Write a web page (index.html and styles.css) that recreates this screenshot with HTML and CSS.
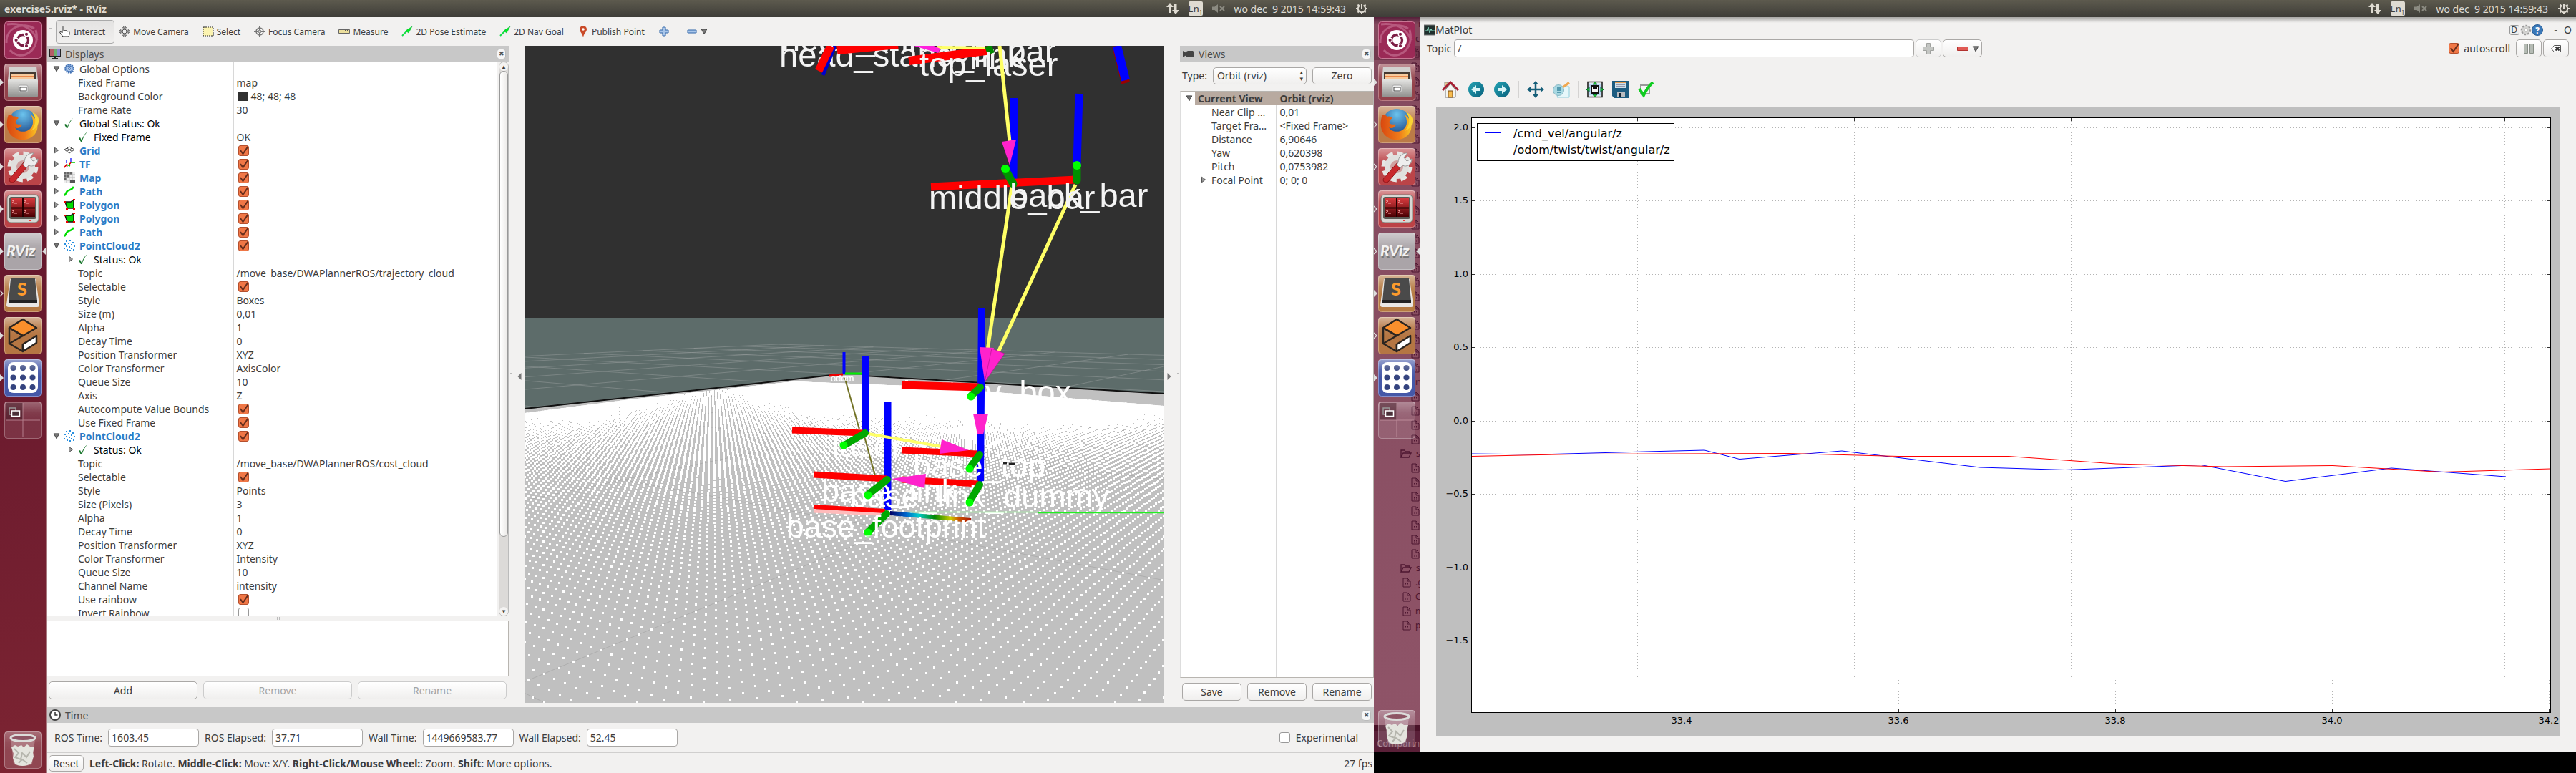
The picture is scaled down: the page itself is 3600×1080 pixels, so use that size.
FILE: index.html
```html
<!DOCTYPE html>
<html lang="en">
<head>
<meta charset="utf-8">
<title>exercise5.rviz* - RViz</title>
<link rel="stylesheet" href="styles.css">
</head>
<body>
<svg class="defs" aria-hidden="true">
  <defs>
    <linearGradient id="gloss" x1="0" y1="0" x2="0" y2="1"><stop offset="0" stop-color="#fff" stop-opacity=".45"/><stop offset=".6" stop-color="#fff" stop-opacity=".08"/><stop offset="1" stop-color="#fff" stop-opacity="0"/></linearGradient>
    <linearGradient id="steel" x1="0" y1="0" x2="0" y2="1"><stop offset="0" stop-color="#e4e4e2"/><stop offset="1" stop-color="#8e8e8c"/></linearGradient>
    <linearGradient id="redscreen" x1="0" y1="0" x2="0" y2="1"><stop offset="0" stop-color="#d83a3e"/><stop offset="1" stop-color="#4a0002"/></linearGradient>
    <radialGradient id="globe" cx=".5" cy=".2" r=".8"><stop offset="0" stop-color="#6cc4ee"/><stop offset="1" stop-color="#12377c"/></radialGradient>
    <linearGradient id="fox" x1="0" y1="0" x2="1" y2="0"><stop offset="0" stop-color="#d9480f"/><stop offset=".6" stop-color="#ef7a1a"/><stop offset="1" stop-color="#f9c623"/></linearGradient>
    <linearGradient id="ball" x1="0" y1="0" x2="1" y2="1"><stop offset="0" stop-color="#25a5b5"/><stop offset="1" stop-color="#08607c"/></linearGradient>
  </defs>
  <symbol id="i-dash" viewBox="0 0 52 52">
    <rect x=".5" y=".5" width="51" height="51" rx="4" fill="#9b2a56" stroke="#c77794"/>
    <path d="M3 30C2 8 26 0 42 10M8 40C24 58 52 40 44 12M4 4C22 2 40 8 46 26" fill="none" stroke="#c9799a" stroke-width="3" opacity=".6"/>
    <circle cx="26" cy="26" r="14" fill="#fff"/><circle cx="26" cy="26" r="7.5" fill="none" stroke="#7c1f45" stroke-width="3.4"/>
    <g fill="#7c1f45" stroke="#fff" stroke-width="1.4"><circle cx="16.6" cy="26" r="2.8"/><circle cx="31" cy="17.8" r="2.8"/><circle cx="31" cy="34.2" r="2.8"/></g>
  </symbol>
  <symbol id="i-files" viewBox="0 0 52 52">
    <rect x=".5" y=".5" width="51" height="51" rx="4" fill="#93424b" stroke="#b97c83"/><rect width="52" height="30" rx="4" fill="url(#gloss)"/>
    <path d="M7 4h38l2 20H5z" fill="#d2d2d0"/><rect x="8" y="12" width="36" height="12" fill="#463a31"/>
    <path d="M10 14h32v10H10z" fill="#e8874a"/><path d="M10 16h32M10 20h32" stroke="#fbe1b8" stroke-width="1.5"/>
    <rect x="5" y="22" width="42" height="25" rx="2" fill="url(#steel)"/><rect x="20" y="30" width="13" height="10" rx="2" fill="#eee" stroke="#aaa"/><rect x="22" y="33" width="9" height="5" fill="#fff" stroke="#444"/>
  </symbol>
  <symbol id="i-firefox" viewBox="0 0 52 52">
    <rect x=".5" y=".5" width="51" height="51" rx="4" fill="#bb7b47" stroke="#cfa078"/><rect width="52" height="30" rx="4" fill="url(#gloss)"/>
    <circle cx="26" cy="24" r="20" fill="url(#globe)"/>
    <path d="M6 12c3 0 5 1 7 3 3-1 5 0 7 2-3 2-5 4-4 7 3 3 6 1 9 2-2 5-7 6-10 4 3 6 13 8 20 3 7-6 6-14 2-21 9 6 13 18 6 27-8 11-27 11-35 0C2 31 3 20 6 12z" fill="url(#fox)"/>
    <path d="M39 9c7 8 5 20-2 26 8-3 12-9 11-17-1-5-5-8-9-9z" fill="#f9d335"/>
  </symbol>
  <symbol id="i-settings" viewBox="0 0 52 52">
    <rect x=".5" y=".5" width="51" height="51" rx="4" fill="#bb4448" stroke="#cf8083"/><rect width="52" height="30" rx="4" fill="url(#gloss)"/>
    <circle cx="26" cy="26" r="17" fill="none" stroke="#e6e6e4" stroke-width="9" stroke-dasharray="8 5.35"/><circle cx="26" cy="26" r="13" fill="#d0a0a0" stroke="#e0e0de" stroke-width="8"/>
    <path d="M8 42 28 19l6 5-20 23c-4 3-9-1-6-5z" fill="#c8282c" stroke="#8e1518"/><path d="M28 20c0-8 6-14 13-13l-5 6 4 5 7-3c0 8-7 12-13 9l-3 4-5-5z" fill="#eee" stroke="#999"/>
  </symbol>
  <symbol id="i-term" viewBox="0 0 52 52">
    <rect x=".5" y=".5" width="51" height="51" rx="4" fill="#bc4246" stroke="#cf8083"/><rect width="52" height="26" rx="4" fill="url(#gloss)"/>
    <rect x="4" y="6" width="44" height="39" rx="5" fill="#d8d8d4" stroke="#77776f"/><rect x="7" y="9" width="38" height="31" rx="3" fill="#5a5a54"/><rect x="9" y="11" width="34" height="26" fill="url(#redscreen)"/>
    <path d="M26 11v26M9 24.500h34" stroke="#200" stroke-width="2"/><path d="M11 14l3 1-3 2m3 1h4M28 14l3 1-3 2m3 1h4M11 28l3 1-3 2m3 1h4M28 28l3 1-3 2m3 1h4" fill="none" stroke="#f4a0a0"/><circle cx="36" cy="42" r="1" fill="#f00"/>
  </symbol>
  <symbol id="i-rviz" viewBox="0 0 52 52">
    <rect x=".5" y=".5" width="51" height="51" rx="4" fill="#aaa4a8" stroke="#c4c0c3"/><rect width="52" height="30" rx="4" fill="url(#gloss)"/>
    <g font-family="Lato,sans-serif" font-weight="900" font-size="21" font-style="italic"><text x="4" y="35" fill="#777">RViz</text><text x="3" y="33" fill="#f2f2f2">RViz</text></g>
  </symbol>
  <symbol id="i-subl" viewBox="0 0 52 52">
    <rect x=".5" y=".5" width="51" height="51" rx="4" fill="#b57a42" stroke="#cda077"/><rect width="52" height="30" rx="4" fill="url(#gloss)"/>
    <path d="M8 6h36l5 36c0 2-1 3-3 3H6c-2 0-3-1-3-3z" fill="#e9e7e4"/><path d="M9 5h34l3 32H6z" fill="#4a4a4a"/><path d="M6 35h40v5H6z" fill="#222"/>
    <text x="18" y="29" font-family="Lato,sans-serif" font-weight="900" font-size="25" fill="#fb9b2d">S</text>
  </symbol>
  <symbol id="i-box" viewBox="0 0 52 52">
    <rect x=".5" y=".5" width="51" height="51" rx="4" fill="#b57643" stroke="#cda077"/><rect width="52" height="26" rx="4" fill="url(#gloss)"/>
    <g stroke="#2a2420" stroke-width="2.500" stroke-linejoin="round" fill="none"><path d="M26 3l19 12-19 11L7 15z" fill="#f98f2c"/><path d="M7 15v22l19 11M7 37l19-11M26 26l-19-11M26 48V37"/><path d="M26 38l19-12v10L26 48z" fill="#fff"/></g>
  </symbol>
  <symbol id="i-grid" viewBox="0 0 52 52">
    <rect x=".5" y=".5" width="51" height="51" rx="4" fill="#4558a8" stroke="#8590cd"/><rect x="5" y="4" width="42" height="43" rx="8" fill="#fff"/>
    <g fill="#34437f"><circle cx="12.500" cy="12" r="4"/><circle cx="26" cy="12" r="4"/><circle cx="39.500" cy="12" r="4"/><circle cx="12.500" cy="25.500" r="4"/><circle cx="26" cy="25.500" r="4"/><circle cx="39.500" cy="25.500" r="4"/><circle cx="12.500" cy="39" r="4"/><circle cx="26" cy="39" r="4"/><circle cx="39.500" cy="39" r="4"/></g><rect width="52" height="26" rx="4" fill="url(#gloss)"/>
  </symbol>
  <symbol id="i-work" viewBox="0 0 52 52">
    <rect x=".5" y=".5" width="51" height="51" rx="4" fill="#fff" fill-opacity=".1" stroke="#fff" stroke-opacity=".3"/><rect width="52" height="26" rx="4" fill="url(#gloss)" opacity=".6"/><rect x="2" y="2" width="24" height="24" fill="#3e1522" opacity=".5"/>
    <path d="M26 2v48M2 26h48" stroke="#cfa0ac" opacity=".7"/><path d="M7 9h9v9H7z" fill="none" stroke="#999" stroke-width="1.500"/><path d="M10.500 13h11v7.500h-11z" fill="#4a3038" stroke="#fff" stroke-width="1.500"/>
  </symbol>
  <symbol id="i-trash" viewBox="0 0 52 52">
    <rect x=".5" y=".5" width="51" height="51" rx="4" fill="#fff" fill-opacity=".16" stroke="#fff" stroke-opacity=".35"/><rect width="52" height="26" rx="4" fill="url(#gloss)" opacity=".5"/>
    <path d="M9 10l4 35c3 4 23 4 26 0l4-35z" fill="#fff" opacity=".25"/><path d="M10 22l5-3 4 2 5-2 3 3 5-4 4 3 6 0-2 8 1 6-3 9c-6 5-18 5-23 1l-3-8 1-6z" fill="#e4e4de"/><path d="M14 24l6 6-5 6 8 3 2-9 6 6 5-8M20 44l5-5 7 5" stroke="#b5b5ad" fill="none" stroke-width="2"/>
    <ellipse cx="26" cy="9" rx="17" ry="4.500" fill="#8e5564" stroke="#dcdcda" stroke-width="3"/>
  </symbol>
  <symbol id="s-net" viewBox="0 0 18 18"><path d="M5 1l5 6H7v8H3.500V7H0zM13 17l-5-6h3V3h3.500v8H18z" fill="#dfdbd2"/></symbol>
  <symbol id="s-mute" viewBox="0 0 18 18"><path d="M0 6.500h3.500L8 3v12l-4.500-4H0z" fill="#8b8a81"/><path d="M11 6l6 6M17 6l-6 6" stroke="#8b8a81" stroke-width="2"/></symbol>
  <symbol id="s-cog" viewBox="0 0 18 18"><path d="M6.500 4.500a5.200 5.200 0 1 0 5 0" fill="none" stroke="#dfdbd2" stroke-width="2"/><path d="M9 2v7M3.500 3.500L5 5M14.500 3.500L13 5M1 9h2M15 9h2M3.500 14.500L5 13M14.500 14.500L13 13M9 15v2" stroke="#dfdbd2" stroke-width="2"/></symbol>
  <symbol id="t-ok" viewBox="0 0 16 16"><path d="M1 10l2-1 2 4C7 8 9 4 13 1 9 6 7 10 5.500 15H4z" fill="#17752a"/></symbol>
  <symbol id="t-gear" viewBox="0 0 16 16"><circle cx="8" cy="8" r="5.800" fill="#9cbbe6" stroke="#4574b5" stroke-width="2" stroke-dasharray="2 1"/><circle cx="8" cy="8" r="4" fill="#a8c4ea" stroke="#4574b5"/><circle cx="8" cy="8" r="1.500" fill="#fff" stroke="#4574b5"/></symbol>
  <symbol id="t-grid" viewBox="0 0 16 16"><path d="M1 7l7-4 7 4-7 5zM4.500 5l7 4.500M11.500 5l-7 4.500" fill="none" stroke="#444"/></symbol>
  <symbol id="t-tf" viewBox="0 0 16 16"><path d="M4 7V3M10 5V0" stroke="#33f" stroke-width="1.500"/><path d="M4 9l5 2M10 6l6 0" stroke="#0c0" stroke-width="1.500"/><path d="M0 14l4-5 1 4M7 10l3-4" stroke="#d00" stroke-width="1.500" fill="none"/></symbol>
  <symbol id="t-map" viewBox="0 0 16 16"><path d="M0 0h11v4H7v5H4v3H0z" fill="#666"/><path d="M11 0h5v16H0v-3h4V9h3V4h4z" fill="#eee"/><path d="M0 4h16M0 8h16M0 12h16M4 0v16M8 0v16M12 0v16" stroke="#bbb"/><path d="M9 12h7v4H9z" fill="#555"/></symbol>
  <symbol id="t-path" viewBox="0 0 16 16"><path d="M1 14c2-1 2-4 4-6s6-1 9-6" fill="none" stroke="#0d0" stroke-width="2.500"/></symbol>
  <symbol id="t-poly" viewBox="0 0 16 16"><path d="M2 4l8 0 4-3 0 12-9 0z" fill="#0d0" stroke="#111" stroke-width="1.500"/><path d="M0 3h3v2H0zM13 0h3v2h-3zM3 12h3v3H3zM13 12h3v3h-3z" fill="#e00"/></symbol>
  <symbol id="t-cloud" viewBox="0 0 16 16"><path d="M3 1h2v2H3zM8 0h2v2H8zM12 3h2v2h-2zM1 5h2v2H1zM6 4h2v2H6zM10 6h2v2h-2zM14 8h2v2h-2zM3 8h2v2H3zM7 9h2v2H7zM0 11h2v2H0zM4 13h2v2H4zM10 11h2v2h-2zM8 14h2v2H8zM13 13h2v2h-2z" fill="#2a90e0"/></symbol>
  <symbol id="b-arrow" viewBox="0 0 16 16"><path d="M1 14L10 5" stroke="#1d4" stroke-width="2"/><path d="M15 1L6 7l4 3z" fill="#0e2" stroke="#0a3" stroke-width=".5"/></symbol>
  <symbol id="a-down" viewBox="0 0 8 8"><path d="M1 1.500h6L4 7z" fill="#777" stroke="#444" stroke-width=".8"/></symbol>
  <symbol id="a-right" viewBox="0 0 8 8"><path d="M2 1v6l4-3z" fill="#999" stroke="#555" stroke-width=".8"/></symbol>
  <symbol id="m-on" viewBox="0 0 6 10"><path d="M0 0l5 5-5 5z" fill="#ddd"/></symbol>
  <symbol id="m-off" viewBox="0 0 6 10"><path d="M0 1l4 4-4 4" fill="none" stroke="#ddd" stroke-width="1.300"/></symbol>
  <symbol id="d-file" viewBox="0 0 12 14"><path d="M1 1h6l4 4v8H1zM7 1v4h4M4 9l1-1M8 9L7 8M4 10h1M7 10h1" fill="none" stroke="#4d1630"/></symbol>
  <symbol id="d-dir" viewBox="0 0 16 14"><path d="M1 12V2h5l1 2h6v2M1 12l3-6h11l-3 6z" fill="none" stroke="#4d1630" stroke-width="1.300"/></symbol>
</svg>

<main class="desktop">
<section class="screen left">
  <header class="panel">
    <span class="panel-title">exercise5.rviz* - RViz</span>
    <span class="status"><svg class="s18"><use href="#s-net"/></svg><span class="lang">En<sub>1</sub></span><svg class="s18"><use href="#s-mute"/></svg><time>wo dec&nbsp; 9 2015 14:59:43</time><svg class="s18"><use href="#s-cog"/></svg></span>
  </header>
  <div class="screen-body">
    <nav class="launcher">
      <a href="#" aria-label="Dash"><svg class="app"><use href="#i-dash"/></svg></a>
      <a href="#" aria-label="Files"><svg class="mark"><use href="#m-on"/></svg><svg class="app"><use href="#i-files"/></svg></a>
      <a href="#" aria-label="Firefox"><svg class="mark"><use href="#m-on"/></svg><svg class="app"><use href="#i-firefox"/></svg></a>
      <a href="#" aria-label="Settings"><svg class="mark"><use href="#m-on"/></svg><svg class="app"><use href="#i-settings"/></svg></a>
      <a href="#" aria-label="Terminator"><svg class="mark"><use href="#m-on"/></svg><svg class="app"><use href="#i-term"/></svg></a>
      <a href="#" aria-label="RViz"><svg class="mark"><use href="#m-on"/></svg><svg class="app"><use href="#i-rviz"/></svg><svg class="mark focus"><use href="#m-on"/></svg></a>
      <a href="#" aria-label="Sublime Text"><svg class="mark"><use href="#m-off"/></svg><svg class="app"><use href="#i-subl"/></svg></a>
      <a href="#" aria-label="Gazebo"><svg class="mark"><use href="#m-on"/></svg><svg class="app"><use href="#i-box"/></svg></a>
      <a href="#" aria-label="rqt"><svg class="mark"><use href="#m-on"/></svg><svg class="app"><use href="#i-grid"/></svg></a>
      <a href="#" aria-label="Workspaces"><svg class="app"><use href="#i-work"/></svg></a>
      <a href="#" aria-label="Trash" class="trash"><svg class="app"><use href="#i-trash"/></svg></a>
    </nav>
    <div class="window">
      <div class="toolbar">
        <span class="grip-v"></span>
        <button class="tool active"><svg class="i16" viewBox="0 0 16 16"><path d="M5 15l-4-5c-1-2 1-2 3 0V1.500c0-1.500 2-1.500 2 0V7c2-1 2 0 2 0 2-1 2 0 2.500 1C13 7 14 8 14 9v3l-1 3z" fill="#fff" stroke="#222"/></svg>Interact</button>
        <button class="tool"><svg class="i16" viewBox="0 0 16 16"><path d="M8 0l2.500 3h-5zM8 16l2.500-3h-5zM0 8l3-2.500v5zM16 8l-3-2.500v5zM8 3v10M3 8h10" stroke="#555" fill="#ddd"/><circle cx="8" cy="8" r="3" fill="#eee" stroke="#555"/></svg>Move Camera</button>
        <button class="tool"><svg class="i16" viewBox="0 0 16 16"><path d="M1 2h14v12H1z" fill="#fbf3b0" stroke="#222" stroke-dasharray="2 1"/></svg>Select</button>
        <button class="tool"><svg class="i16" viewBox="0 0 16 16"><circle cx="8" cy="8" r="5" fill="none" stroke="#777" stroke-width="1.500"/><path d="M8 0v16M0 8h16" stroke="#777" stroke-width="2"/><circle cx="8" cy="8" r="2" fill="#ddd" stroke="#777"/></svg>Focus Camera</button>
        <button class="tool"><svg class="i16" viewBox="0 0 16 16"><path d="M.5 5.500h15v5H.5z" fill="#ecdf9c" stroke="#666"/><path d="M3.500 6v2M6.500 6v2M9.500 6v2M12.500 6v2" stroke="#555"/></svg>Measure</button>
        <button class="tool"><svg class="i16"><use href="#b-arrow"/></svg>2D Pose Estimate</button>
        <button class="tool"><svg class="i16"><use href="#b-arrow"/></svg>2D Nav Goal</button>
        <button class="tool"><svg class="i16" viewBox="0 0 16 16"><path d="M8 16C7 11 3 8 3 5a5 5 0 0 1 10 0c0 3-4 6-5 11z" fill="#c94a28"/><circle cx="8" cy="5" r="1.800" fill="#fff"/></svg>Publish Point</button>
        <button class="tool" aria-label="Add tool"><svg class="i16" viewBox="0 0 16 16"><path d="M6 2h4v4h4v4h-4v4H6v-4H2V6h4z" fill="#a9c6ea" stroke="#2f65a8"/></svg></button>
        <button class="tool last" aria-label="Remove tool"><svg class="i16" viewBox="0 0 16 16"><path d="M2 6h12v4H2z" fill="#a9c6ea" stroke="#2f65a8"/></svg><svg class="i8"><use href="#a-down"/></svg></button>
      </div>
      <div class="workspace">
        <section class="displays">
          <h2 class="dock-title"><svg class="i16" viewBox="0 0 16 16"><path d="M0 1h16v11H0z" fill="#222"/><path d="M1 2h5v9H1z" fill="#b65c66"/><path d="M6 2h4v9H6z" fill="#6cb070"/><path d="M10 2h5v9h-5z" fill="#8b8bd0"/><path d="M7 12h2v2h3v2H4v-2h3z" fill="#222"/></svg>Displays<button class="close" aria-label="Close">✖</button></h2>
          <div class="tree-wrap">
            <div class="tree">
              <table>
                <tr><th class="l0"><svg class="i8"><use href="#a-down"/></svg><svg class="i16"><use href="#t-gear"/></svg>Global Options</th><td></td></tr>
                <tr><th>Fixed Frame</th><td>map</td></tr>
                <tr><th>Background Color</th><td><i class="swatch"></i>48; 48; 48</td></tr>
                <tr><th>Frame Rate</th><td>30</td></tr>
                <tr><th class="l0 ok"><svg class="i8"><use href="#a-down"/></svg><svg class="i16"><use href="#t-ok"/></svg>Global Status: Ok</th><td></td></tr>
                <tr><th class="l1 ok"><i class="i8"></i><svg class="i16"><use href="#t-ok"/></svg>Fixed Frame</th><td>OK</td></tr>
                <tr><th class="l0 name"><svg class="i8"><use href="#a-right"/></svg><svg class="i16"><use href="#t-grid"/></svg>Grid</th><td><input type="checkbox" aria-label="Grid" checked></td></tr>
                <tr><th class="l0 name"><svg class="i8"><use href="#a-right"/></svg><svg class="i16"><use href="#t-tf"/></svg>TF</th><td><input type="checkbox" aria-label="TF" checked></td></tr>
                <tr><th class="l0 name"><svg class="i8"><use href="#a-right"/></svg><svg class="i16"><use href="#t-map"/></svg>Map</th><td><input type="checkbox" aria-label="Map" checked></td></tr>
                <tr><th class="l0 name"><svg class="i8"><use href="#a-right"/></svg><svg class="i16"><use href="#t-path"/></svg>Path</th><td><input type="checkbox" aria-label="Path" checked></td></tr>
                <tr><th class="l0 name"><svg class="i8"><use href="#a-right"/></svg><svg class="i16"><use href="#t-poly"/></svg>Polygon</th><td><input type="checkbox" aria-label="Polygon" checked></td></tr>
                <tr><th class="l0 name"><svg class="i8"><use href="#a-right"/></svg><svg class="i16"><use href="#t-poly"/></svg>Polygon</th><td><input type="checkbox" aria-label="Polygon" checked></td></tr>
                <tr><th class="l0 name"><svg class="i8"><use href="#a-right"/></svg><svg class="i16"><use href="#t-path"/></svg>Path</th><td><input type="checkbox" aria-label="Path" checked></td></tr>
                <tr><th class="l0 name"><svg class="i8"><use href="#a-down"/></svg><svg class="i16"><use href="#t-cloud"/></svg>PointCloud2</th><td><input type="checkbox" aria-label="PointCloud2" checked></td></tr>
                <tr><th class="l1 ok"><svg class="i8"><use href="#a-right"/></svg><svg class="i16"><use href="#t-ok"/></svg>Status: Ok</th><td></td></tr>
                <tr><th>Topic</th><td>/move_base/DWAPlannerROS/trajectory_cloud</td></tr>
                <tr><th>Selectable</th><td><input type="checkbox" aria-label="Selectable" checked></td></tr>
                <tr><th>Style</th><td>Boxes</td></tr>
                <tr><th>Size (m)</th><td>0,01</td></tr>
                <tr><th>Alpha</th><td>1</td></tr>
                <tr><th>Decay Time</th><td>0</td></tr>
                <tr><th>Position Transformer</th><td>XYZ</td></tr>
                <tr><th>Color Transformer</th><td>AxisColor</td></tr>
                <tr><th>Queue Size</th><td>10</td></tr>
                <tr><th>Axis</th><td>Z</td></tr>
                <tr><th>Autocompute Value Bounds</th><td><input type="checkbox" aria-label="Autocompute Value Bounds" checked></td></tr>
                <tr><th>Use Fixed Frame</th><td><input type="checkbox" aria-label="Use Fixed Frame" checked></td></tr>
                <tr><th class="l0 name"><svg class="i8"><use href="#a-down"/></svg><svg class="i16"><use href="#t-cloud"/></svg>PointCloud2</th><td><input type="checkbox" aria-label="PointCloud2" checked></td></tr>
                <tr><th class="l1 ok"><svg class="i8"><use href="#a-right"/></svg><svg class="i16"><use href="#t-ok"/></svg>Status: Ok</th><td></td></tr>
                <tr><th>Topic</th><td>/move_base/DWAPlannerROS/cost_cloud</td></tr>
                <tr><th>Selectable</th><td><input type="checkbox" aria-label="Selectable" checked></td></tr>
                <tr><th>Style</th><td>Points</td></tr>
                <tr><th>Size (Pixels)</th><td>3</td></tr>
                <tr><th>Alpha</th><td>1</td></tr>
                <tr><th>Decay Time</th><td>0</td></tr>
                <tr><th>Position Transformer</th><td>XYZ</td></tr>
                <tr><th>Color Transformer</th><td>Intensity</td></tr>
                <tr><th>Queue Size</th><td>10</td></tr>
                <tr><th>Channel Name</th><td>intensity</td></tr>
                <tr><th>Use rainbow</th><td><input type="checkbox" aria-label="Use rainbow" checked></td></tr>
                <tr><th>Invert Rainbow</th><td><input type="checkbox" aria-label="Invert Rainbow"></td></tr>
              </table>
            </div>
            <div class="scrollbar"><i class="sb-btn">▴</i><i class="sb-thumb"></i><i class="sb-rest"></i><i class="sb-btn">▾</i></div>
          </div>
          <div class="split-h"><span class="grip-h"></span></div>
          <div class="description"></div>
          <div class="buttons wide"><button>Add</button><button disabled>Remove</button><button disabled>Rename</button></div>
        </section>
        <div class="handle"><span class="grip-v"></span><svg class="i10" viewBox="0 0 8 8"><path d="M6 0v8L2 4z" fill="#777"/></svg></div>
        <div class="scene">
          <canvas id="ground" width="894" height="918"></canvas>
          <svg class="frames" viewBox="733 64 894 918" preserveAspectRatio="none">
            <defs><linearGradient id="traj"><stop offset="0" stop-color="#006"/><stop offset=".2" stop-color="#06c"/><stop offset=".35" stop-color="#0cc"/><stop offset=".55" stop-color="#080"/><stop offset=".75" stop-color="#cc0"/><stop offset=".85" stop-color="#c50"/><stop offset="1" stop-color="#a10"/></linearGradient></defs>
            <g class="lbl">
              <text x="1092" y="71">head_link</text><text x="1089" y="93">head_stand_link</text><text x="1316" y="87">top_bar</text>
            </g>
            <g fill="none">
              <path d="M1167 64L1150 105M1560 64L1572 112" stroke="#00c" stroke-width="5"/>
              <path d="M1161 64L1144 99" stroke="#f00" stroke-width="11"/>
              <path d="M1170 70L1255 62M1270 85L1385 70" stroke="#f00" stroke-width="12"/>
              <path d="M1560 64L1573 116" stroke="#900" stroke-width="12"/><path d="M1561 64L1573 112" stroke="#00f" stroke-width="12"/>
              <path d="M1310 66L1378 67" stroke="#ffff66" stroke-width="4"/>
              <path d="M1381 64L1385 75" stroke="#080" stroke-width="10"/>
            </g>
            <path d="M1277 64h28l9 4-3 6z" fill="#f2d"/>
            <g class="lbl"><text x="1285" y="106">top_laser</text></g>
            <g fill="none">
              <path d="M1417 137L1416 252M1508 131L1505 230" stroke="#00f" stroke-width="11"/>
              <path d="M1397 64L1411 198M1414 260L1380 490M1503 258L1395 492" stroke="#ffff66" stroke-width="5"/>
              <path d="M1301 261L1502 251" stroke="#f00" stroke-width="11"/>
              <path d="M1405 237L1416 257M1505 232V252" stroke="#009000" stroke-width="11" stroke-linecap="round"/>
            </g>
            <path d="M1400 198l20-3-9 36z" fill="#f2c"/>
            <ellipse cx="1405" cy="236" rx="6" ry="6" fill="#0f0"/><ellipse cx="1505" cy="231" rx="6" ry="6" fill="#0f0"/>
            <g class="lbl"><text x="1298" y="292">middle_bar</text><text x="1411" y="289">back_bar</text></g>
            <g class="lbl lower"><text x="1262" y="563">battery_box</text><text x="1163" y="638">laser</text></g>
            <g fill="none">
              <path d="M1180 526L1201 600M1208 610L1224 668" stroke="#6f6f20" stroke-width="2"/>
              <path d="M1179.500 492V523" stroke="#00f" stroke-width="4"/><path d="M1159 525L1178 523" stroke="#e00" stroke-width="3"/><path d="M1181 522H1204" stroke="#0e0" stroke-width="3"/>
              <path d="M1372 430L1370 674M1209 498V606M1240.500 562V713" stroke="#00f" stroke-width="10"/>
              <path d="M1260 538L1368 541" stroke="#f00" stroke-width="11"/>
              <path d="M1107 601L1206 605M1260 629L1366 634M1137 663L1239 669M1260 670L1367 676" stroke="#f00" stroke-width="9"/>
              <path d="M1137 714L1230 718" stroke="#fbb" stroke-width="5"/><path d="M1137 708L1237 714" stroke="#f00" stroke-width="6"/>
              <path d="M1213 606L1316 624" stroke="#ffff66" stroke-width="4"/>
            </g>
            <g class="lbl tiny"><text x="1161" y="533">odom</text><text x="1167" y="533">map</text></g>
            <g class="lbl lower"><text x="1276" y="666">base_top</text><text x="1148" y="701">base_link</text><text x="1187" y="709">base_link_dummy</text></g>
            <g fill="#f2c"><path d="M1369 485l20 1-13 46z"/><path d="M1386 487l18 7-28 40z" stroke="#a18" stroke-width=".6"/><path d="M1360 578h21l-7 29h-8z"/><path d="M1316 614l38 15-41 5z"/><path d="M1246 669l48-7-2 20z"/></g>
            <g stroke="#00a800" stroke-width="10" stroke-linecap="round"><path d="M1357 553L1370 541M1180 622L1209 605M1355 654L1369 635M1213 691L1240 670M1355 701L1369 677M1213 743L1239 718"/></g>
            <g fill="#0f0"><circle cx="1357" cy="554" r="5.500"/><circle cx="1179" cy="622" r="5.500"/><circle cx="1355" cy="655" r="5.500"/><circle cx="1213" cy="692" r="5.500"/><circle cx="1355" cy="702" r="5.500"/><circle cx="1213" cy="744" r="5.500"/></g>
            <path d="M1208 747h11l-6 4z" fill="#afa"/>
            <path d="M1270 715.500H1450" stroke="#9f9" stroke-width="1.500"/><path d="M1450 716.500H1627" stroke="#2e2" stroke-width="1.500"/>
            <path d="M1244 714L1357 724v6L1244 720z" fill="url(#traj)"/>
            <path d="M1402 647h5M1410 648h9" stroke="#222" stroke-width="3"/>
            <g class="lbl foot"><text x="1099" y="751">base_footprint</text></g>
          </svg>
        </div>
        <div class="handle right"><svg class="i10" viewBox="0 0 8 8"><path d="M2 0v8l4-4z" fill="#777"/></svg><span class="grip-v"></span></div>
        <section class="views">
          <h2 class="dock-title"><svg class="i16" viewBox="0 0 16 16"><path d="M0 4l5 3V5l2-1h7l2 2v5l-2 2H7l-2-1v-2l-5 3z" fill="#444"/></svg>Views<button class="close" aria-label="Close">✖</button></h2>
          <div class="view-type"><label for="vtype">Type:</label><span class="select"><select id="vtype"><option>Orbit (rviz)</option></select><i>▴<br>▾</i></span><button>Zero</button></div>
          <div class="tree view-tree">
            <table>
              <tr class="current"><th><svg class="i8"><use href="#a-down"/></svg><span>Current View</span></th><td>Orbit (rviz)</td></tr>
              <tr><th>Near Clip …</th><td>0,01</td></tr>
              <tr><th>Target Fra…</th><td>&lt;Fixed Frame&gt;</td></tr>
              <tr><th>Distance</th><td>6,90646</td></tr>
              <tr><th>Yaw</th><td>0,620398</td></tr>
              <tr><th>Pitch</th><td>0,0753982</td></tr>
              <tr><th class="sub"><svg class="i8"><use href="#a-right"/></svg>Focal Point</th><td>0; 0; 0</td></tr>
            </table>
          </div>
          <div class="buttons"><button>Save</button><button>Remove</button><button>Rename</button></div>
        </section>
      </div>
      <section class="time-panel">
        <h2 class="dock-title"><svg class="i16" viewBox="0 0 16 16"><circle cx="8" cy="8" r="7" fill="#fff" stroke="#444" stroke-width="2"/><path d="M8 4v4h3.500" fill="none" stroke="#333" stroke-width="1.500"/></svg>Time<button class="close" aria-label="Close">✖</button></h2>
        <div class="times">
          <label>ROS Time:<input type="text" value="1603.45"></label>
          <label>ROS Elapsed:<input type="text" value="37.71"></label>
          <label>Wall Time:<input type="text" value="1449669583.77"></label>
          <label>Wall Elapsed:<input type="text" value="52.45"></label>
          <label class="exp"><input type="checkbox">Experimental</label>
        </div>
      </section>
      <footer class="statusbar"><button>Reset</button><p><b>Left-Click:</b> Rotate. <b>Middle-Click:</b> Move X/Y. <b>Right-Click/Mouse Wheel:</b>: Zoom. <b>Shift</b>: More options.</p><span>27 fps</span></footer>
    </div>
  </div>
</section>

<section class="screen second">
  <header class="panel">
    <span class="status"><svg class="s18"><use href="#s-net"/></svg><span class="lang">En<sub>1</sub></span><svg class="s18"><use href="#s-mute"/></svg><time>wo dec&nbsp; 9 2015 14:59:43</time><svg class="s18"><use href="#s-cog"/></svg></span>
  </header>
  <div class="screen-body">
    <nav class="launcher glass">
      <div class="behind" id="behind" aria-hidden="true"></div>
      <a href="#" aria-label="Dash"><svg class="app"><use href="#i-dash"/></svg></a>
      <a href="#" aria-label="Files"><svg class="mark"><use href="#m-on"/></svg><svg class="app"><use href="#i-files"/></svg></a>
      <a href="#" aria-label="Firefox"><svg class="mark"><use href="#m-off"/></svg><svg class="app"><use href="#i-firefox"/></svg></a>
      <a href="#" aria-label="Settings"><svg class="mark"><use href="#m-off"/></svg><svg class="app"><use href="#i-settings"/></svg></a>
      <a href="#" aria-label="Terminator"><svg class="mark"><use href="#m-off"/></svg><svg class="app"><use href="#i-term"/></svg></a>
      <a href="#" aria-label="RViz"><svg class="mark"><use href="#m-off"/></svg><svg class="app"><use href="#i-rviz"/></svg><svg class="mark focus"><use href="#m-on"/></svg></a>
      <a href="#" aria-label="Sublime Text"><svg class="mark"><use href="#m-on"/></svg><svg class="app"><use href="#i-subl"/></svg></a>
      <a href="#" aria-label="Gazebo"><svg class="mark"><use href="#m-off"/></svg><svg class="app"><use href="#i-box"/></svg></a>
      <a href="#" aria-label="rqt"><svg class="mark"><use href="#m-on"/></svg><svg class="app"><use href="#i-grid"/></svg></a>
      <a href="#" aria-label="Workspaces"><svg class="app"><use href="#i-work"/></svg></a>
      <a href="#" aria-label="Trash" class="trash"><svg class="app"><use href="#i-trash"/></svg></a>
    </nav>
    <div class="matplot">
      <div class="mp-title"><svg class="i16" viewBox="0 0 16 16"><path d="M0 1h16v14H0z" fill="#20302e" stroke="#777"/><path d="M1 9h3l2-5 2 8 2-6 1 3h4" fill="none" stroke="#7fd0b8"/></svg><h2>MatPlot</h2>
        <span class="mp-ctl"><button class="dbtn">D</button><svg class="i16" viewBox="0 0 16 16"><circle cx="8" cy="8" r="6" fill="#ccc" stroke="#999" stroke-width="2.500" stroke-dasharray="2.500 2"/><circle cx="8" cy="8" r="5" fill="#d4d4d2"/><circle cx="8" cy="8" r="2" fill="#fff" stroke="#aaa"/></svg><svg class="i16" viewBox="0 0 16 16"><circle cx="8" cy="8" r="7.500" fill="#3a78b8" stroke="#285d96"/><text x="8" y="12.500" text-anchor="middle" font-family="Noto Sans,sans-serif" font-size="12" font-weight="bold" fill="#fff">?</text></svg><span class="minmax"><b>-</b><span>O</span></span></span>
      </div>
      <div class="mp-topic">
        <label for="topic">Topic</label><input id="topic" type="text" value="/">
        <button class="w36" disabled aria-label="Add"><svg class="i16" viewBox="0 0 16 16"><path d="M5.500.5h5v5h5v5h-5v5h-5v-5h-5v-5h5z" fill="#c4c6c3" stroke="#a0a29f"/></svg></button>
        <button class="w55" aria-label="Remove"><svg class="i16" viewBox="0 0 16 16"><path d="M.5 5.500h15v5H.5z" fill="#e05a55" stroke="#b2322f"/></svg><svg class="i8"><use href="#a-down"/></svg></button>
        <label class="auto"><input type="checkbox" checked>autoscroll</label>
        <button class="w36" aria-label="Pause"><svg class="i16" viewBox="0 0 16 16"><path d="M1.500 1.500h5v13h-5zM9.500 1.500h5v13h-5z" fill="#b5bbb4" stroke="#888f87"/></svg></button>
        <button class="w36" aria-label="Clear"><svg class="i16" viewBox="0 0 16 16"><path d="M1.500 8l4-4.500h9v9h-9z" fill="#fff" stroke="#555"/><path d="M7.500 5.500l5 5M12.500 5.500l-5 5" stroke="#333" stroke-width="2"/></svg></button>
      </div>
      <div class="mp-tools">
        <button aria-label="Home"><svg viewBox="0 0 24 24"><path d="M4 2h4v8H4z" fill="#e8c890" stroke="#888"/><path d="M5 12l7-8 7 8v11H5z" fill="#f4f4f0" stroke="#777"/><path d="M9 23v-9h6v9z" fill="#f6bb50" stroke="#7a4a10"/><path d="M1 13L12 2l11 11" fill="none" stroke="#a61c30" stroke-width="3"/></svg></button>
        <button aria-label="Back"><svg viewBox="0 0 24 24"><circle cx="12" cy="12" r="11" fill="url(#ball)"/><path d="M5 12l7-6v4h6v4h-6v4z" fill="#d8f4f6"/></svg></button>
        <button aria-label="Forward"><svg viewBox="0 0 24 24"><circle cx="12" cy="12" r="11" fill="url(#ball)"/><path d="M19 12l-7-6v4H6v4h6v4z" fill="#d8f4f6"/></svg></button>
        <i class="sep"></i>
        <button aria-label="Pan"><svg viewBox="0 0 24 24"><path d="M12 3v18M3 12h18" stroke="#155e78" stroke-width="2.500"/><path d="M12 0l4 5H8zM12 24l4-5H8zM0 12l5-4v8zM24 12l-5-4v8z" fill="#155e78"/></svg></button>
        <button aria-label="Zoom"><svg viewBox="0 0 24 24"><path d="M9 8h14v15H6z" fill="#e6f7fa" stroke="#8ecfdd"/><circle cx="8" cy="13" r="7.500" fill="#a8d8e2" stroke="#8bb8c4"/><path d="M6 10h6M6 13h6M6 16h5" stroke="#3a87a0" stroke-width="1.500"/><path d="M13 8L22 1l2 3-9 6z" fill="#f0a850"/></svg></button>
        <i class="sep"></i>
        <button aria-label="Subplots"><svg viewBox="0 0 24 24"><path d="M2 1.500h20v21H2z" fill="#fff" stroke="#111" stroke-width="1.500"/><path d="M4 3.500h16v17H4z" fill="#b9d6f2"/><path d="M7 7h10v10H7z" fill="#f4f4f4" stroke="#111" stroke-width="2"/><path d="M12 1l3 4H9zM12 23l3-4H9zM0 12l4-3v6zM24 12l-4-3v6z" fill="#1fbf2a" stroke="#063"/><path d="M9 10h6" stroke="#111" stroke-width="2"/></svg></button>
        <button aria-label="Save"><svg viewBox="0 0 24 24"><path d="M0 0h24v24H3l-3-3z" fill="#1d5c80"/><path d="M4 1h16v9H4z" fill="#cfe0ea"/><path d="M4 1h16v2H4z" fill="#e59a4c"/><path d="M6 5h12M6 8h12" stroke="#557"/><path d="M7 15h11v8H7z" fill="#b8bcc0"/><path d="M9 17h3v5H9z" fill="#123"/></svg></button>
        <button aria-label="Edit"><svg viewBox="0 0 24 24"><path d="M4 6h12v12H4z" fill="#f6f6f6" stroke="#999" stroke-width="2"/><path d="M2 11l6 9C12 12 16 6 21 2" fill="none" stroke="#10cc20" stroke-width="4"/></svg></button>
      </div>
      <div class="figure">
        <svg viewBox="2007 150 1571 878" id="plot">
          <rect x="2007" y="150" width="1571" height="878" fill="#bfbfbf"/>
          <rect x="2056.500" y="164.500" width="1508" height="831" fill="#fff"/>
          <g stroke="#b4b4b4" stroke-dasharray="1 3"><path d="M2057 178.500H3564M2057 280.500H3564M2057 383.500H3564M2057 485.500H3564M2057 588.500H3564M2057 690.500H3564M2057 793.500H3564M2057 895.500H3564"/><path d="M2288.500 165V947M2591.500 165V947M2894.500 165V947M3197.500 165V947M3500.500 165V947M2350.500 950V995M2653.500 950V995M2956.500 950V995M3259.500 950V995M3562.500 950V995"/></g>
          <path d="M2057 178.500h5M2057 280.500h5M2057 383.500h5M2057 485.500h5M2057 588.500h5M2057 690.500h5M2057 793.500h5M2057 895.500h5M3564 178.500h-4M3564 280.500h-4M3564 383.500h-4M3564 485.500h-4M3564 588.500h-4M3564 690.500h-4M3564 793.500h-4M3564 895.500h-4M2288.500 165v4M2591.500 165v4M2894.500 165v4M3197.500 165v4M3500.500 165v4M2350.500 995v-4M2653.500 995v-4M2956.500 995v-4M3259.500 995v-4M3562.500 995v-4" stroke="#333"/>
          <path d="M2057 634L2150 635 2300 631 2382 629 2431 641.500 2574 630 2767 653 2886 656.500 3076 649.500 3194 672.500 3342 654 3502 666" fill="none" stroke="#00f"/>
          <path d="M2057 637.500L2200 634.500 2500 633.500 2653 637.500H2807L2957 648 3107 652 3260 650.500 3412 659.500 3564 655" fill="none" stroke="#f00"/>
          <rect x="2056.500" y="164.500" width="1508" height="831" fill="none" stroke="#000"/>
          <rect x="2064.500" y="172.500" width="275" height="52" fill="#fff" stroke="#000"/>
          <path d="M2075 185.500h23" stroke="#00f"/><path d="M2075 209.500h23" stroke="#f00"/>
          <g class="legend"><text x="2115" y="192">/cmd_vel/angular/z</text><text x="2115" y="215">/odom/twist/twist/angular/z</text></g>
          <g class="tick" text-anchor="end"><text x="2052" y="182">2.0</text><text x="2052" y="284">1.5</text><text x="2052" y="387">1.0</text><text x="2052" y="489">0.5</text><text x="2052" y="592">0.0</text><text x="2052" y="694">−0.5</text><text x="2052" y="797">−1.0</text><text x="2052" y="899">−1.5</text></g>
          <g class="tick" text-anchor="middle"><text x="2350" y="1011">33.4</text><text x="2653" y="1011">33.6</text><text x="2956" y="1011">33.8</text><text x="3259" y="1011">34.0</text><text x="3562" y="1011">34.2</text></g>
        </svg>
      </div>
    </div>
  </div>
</section>
</main>
<script src="scene.js"></script>
</body>
</html>
```
FILE: styles.css
```css
* { box-sizing: border-box; }
body { margin: 0; background: #000; color: #3c3c3c; font: 14px/19px "Noto Sans", "Open Sans", sans-serif; }
h2, p { margin: 0; font-weight: normal; font-size: inherit; }
button, input, select { font: inherit; color: inherit; }
svg { display: block; flex: none; }
.defs { position: absolute; width: 0; height: 0; }
.i16 { width: 16px; height: 16px; flex: none; }
.i10 { width: 10px; height: 10px; }
.i8 { width: 10px; height: 10px; flex: none; }
.s18 { width: 18px; height: 18px; }

.desktop { display: flex; align-items: flex-start; min-height: 100vh; }
.screen { display: flex; flex-direction: column; min-width: 0; }
.left { flex: 1920 1 0; height: 100vh; }
.second { flex: 1680 1 0; height: calc(100vh - 30px); }
.screen-body { display: flex; flex: 1; min-height: 0; }

.panel { height: 24px; flex: none; display: flex; align-items: center; padding: 0 8px 0 6px; background: linear-gradient(#5d5a4e, #3e3d38); color: #dfdbd2; }
.panel-title { font-weight: bold; font-size: 14px; }
.status { margin-left: auto; display: flex; align-items: center; gap: 13px; }
.lang { background: #dfdbd2; color: #3e3d38; border-radius: 2px; width: 20px; height: 20px; font-size: 13px; line-height: 20px; text-align: center; }
.lang sub { font-size: 8px; line-height: 0; }
.status time { font-size: 14px; }

.launcher { width: 65px; flex: none; padding: 6px 0; display: flex; flex-direction: column; gap: 7px; position: relative; overflow: hidden; background: linear-gradient(#4c1022, #5d142a 12px, #6a1a2e 45%, #7c2432); border-right: 1px solid #a87a80; }
.launcher a { position: relative; flex: none; height: 52px; padding-left: 6px; }
.app { width: 52px; height: 52px; }
.mark { position: absolute; left: 0; top: 21px; width: 6px; height: 10px; }
.mark.focus { left: auto; right: 0; transform: scaleX(-1); }
.launcher .trash { margin-top: auto; }
.glass { background: linear-gradient(#55203a, #844a5e 10px, #8f5468); }
.behind { position: absolute; inset: 0; font-size: 12px; line-height: 20px; color: #4d1630; white-space: nowrap; overflow: hidden; display: flex; flex-direction: column; }
.behind div { height: 20px; flex: none; display: flex; align-items: center; gap: 6px; }
.behind .file { padding-left: 52px; }
.behind .dir { padding-left: 37px; }
.behind .top { padding-left: 40px; }
.behind .word { padding-left: 58px; }
.behind .sel { background: rgba(80, 20, 45, .35); }
.behind .foot { margin-top: auto; height: 37px; align-items: flex-end; padding: 0 0 2px 4px; background: #5a2038; color: #98687a; font-size: 13px; border-top: 8px solid #4a1228; }
.file12 { width: 12px; height: 14px; }
.dir16 { width: 16px; height: 14px; }

.window { flex: 1; min-width: 0; display: flex; flex-direction: column; background: #f2f1f0; }
.toolbar { height: 40px; flex: none; display: flex; align-items: center; gap: 5px; padding: 0 4px; font-size: 12px; }
.grip-v { width: 4px; height: 10px; background: repeating-linear-gradient(#bbb 0 1px, transparent 1px 4px); }
.grip-h { width: 8px; height: 4px; background: repeating-linear-gradient(90deg, #bbb 0 1px, transparent 1px 3px); }
.tool { display: flex; align-items: center; gap: 4px; height: 33px; padding: 0 6px; border: 1px solid transparent; background: none; border-radius: 4px; white-space: nowrap; }
.tool.active { padding: 0 12px 0 4px; margin-right: -6px; border-color: #aaa; background: linear-gradient(#e4e3e2, #f0efee); }
.tool.last { padding: 0 10px; }

.workspace { flex: 1; min-height: 0; display: flex; }
.displays { width: 646px; flex: none; display: flex; flex-direction: column; min-height: 0; }
.dock-title { height: 22px; flex: none; display: flex; align-items: center; gap: 6px; padding: 0 4px; background: #c8c8c8; color: #4c4c4c; }
.close { margin-left: auto; width: 13px; height: 15px; padding: 0; border: 1px solid #bbb; border-radius: 4px; background: #f6f6f6; color: #555; font-size: 9px; line-height: 12px; }
.tree-wrap { flex: 1; min-height: 0; display: flex; gap: 2px; }
.tree { flex: 1; min-width: 0; overflow: hidden; background: #fff; border: 1px solid #b8b5b0; border-left-color: #ddd; }
table { border-collapse: collapse; table-layout: fixed; width: 100%; }
tr { height: 19px; }
th, td { padding: 0; height: 19px; line-height: 19px; font-weight: normal; text-align: left; white-space: nowrap; overflow: hidden; }
th { width: 260px; padding-left: 43px; border-right: 1px solid #d8d8d8; }
td { padding-left: 4px; }
th svg, th i { display: inline-block; vertical-align: top; }
th .i8 { margin-top: 4px; }
.l0 { padding-left: 8px; }
.l1 { padding-left: 28px; }
.l0 .i16, .l1 .i16 { margin: 1px 6px 0 5px; }
.ok { color: #000; }
.name { color: #2a7cc7; font-weight: bold; }
.swatch { display: inline-block; width: 13px; height: 13px; margin: 3px 5px 0 2px; background: #303030; vertical-align: top; }
input[type=checkbox] { appearance: none; width: 15px; height: 15px; margin: 0; flex: none; border: 1px solid #999; border-radius: 3px; background: #fff; }
input[type=checkbox]:checked { border-color: #b5502e; background: url("data:image/svg+xml,%3Csvg xmlns='http://www.w3.org/2000/svg' viewBox='0 0 13 13'%3E%3Cpath d='M2 6l3.500 5L13 0' fill='none' stroke='%23662d1c' stroke-width='2'/%3E%3C/svg%3E") #f07746; }
td input[type=checkbox] { display: block; margin-left: 2px; }
.scrollbar { width: 14px; flex: none; display: flex; flex-direction: column; border: 1px solid #bbb; border-radius: 7px; background: #dcdad8; }
.sb-btn { height: 12px; text-align: center; font: normal 9px/12px "DejaVu Sans", sans-serif; background: #f4f3f2; border-radius: 6px; }
.sb-thumb { flex: 650; border: 1px solid #999; border-radius: 7px; background: linear-gradient(90deg, #fff, #eceae8); }
.sb-rest { flex: 98; }
.split-h { height: 6px; flex: none; display: flex; justify-content: center; align-items: center; }
.description { height: 78px; flex: none; background: #fff; border: 1px solid #b8b5b0; }
.buttons { display: flex; gap: 8px; padding: 7px 3px 9px; flex: none; }
.buttons button { flex: 1; }
.wide { padding-bottom: 11px; }
.buttons button, .view-type button, .statusbar button, .mp-topic button { height: 25px; padding: 0; border: 1px solid #aaa8a6; border-radius: 5px; background: linear-gradient(#fff, #f0efee); color: #3c3c3c; }
button:disabled { color: #a4a4a4 !important; border-color: #ccc !important; }

.handle { width: 22px; flex: none; display: flex; align-items: center; justify-content: flex-end; gap: 6px; padding: 0 2px; }
.handle.right { justify-content: flex-start; }
.scene { flex: 1; min-width: 0; position: relative; margin-bottom: 6px; overflow: hidden; background: #303030; }
.scene canvas, .frames { position: absolute; inset: 0; width: 100%; height: 100%; }
.lbl { font: 47px "Liberation Sans", sans-serif; fill: #f4f4f4; }
.lower { font-size: 45px; fill: #fff; }
.foot { font-size: 44px; fill: #fff; }
.tiny { font-size: 13px; fill: #fff; }

.views { width: 271px; flex: none; display: flex; flex-direction: column; }
.view-type { display: flex; align-items: center; gap: 8px; padding: 8px 3px 10px; height: 41px; flex: none; }
.view-type button { width: 83px; height: 24px; }
.select { position: relative; flex: 1; }
.select select { appearance: none; width: 100%; height: 24px; padding: 0 5px; border: 1px solid #aaa8a6; border-radius: 5px; background: linear-gradient(#fff, #f0efee); }
.select i { position: absolute; right: 5px; top: 3px; font: normal 9px/9px "DejaVu Sans", sans-serif; }
.view-tree { background: linear-gradient(90deg, transparent 133px, #d8d8d8 133px 134px, transparent 134px) #fff; }
.view-tree th { width: 134px; }
.view-tree .current { background: linear-gradient(90deg, #fff 20px, #b8aaa0 20px); }
.view-tree .current th, .view-tree .current td { font-weight: bold; }
.view-tree .current th { padding-left: 7px; border-color: #aaa098; }
.view-tree .current span { padding-left: 7px; }
.view-tree .sub { padding-left: 27px; }
.view-tree .sub svg { margin-right: 6px; }

.times { height: 41px; display: flex; align-items: center; gap: 8px; padding: 0 22px 0 11px; }
.times label { display: flex; align-items: center; gap: 8px; }
input[type=text] { height: 25px; padding: 0 4px; border: 1px solid #aaa8a6; border-radius: 4px; background: #fff; }
.times input[type=text] { width: 127px; }
.times .exp { margin-left: auto; }
.statusbar { height: 29px; flex: none; display: flex; align-items: center; gap: 8px; padding: 0 2px 0 3px; border-top: 1px solid #d0cfce; }
.statusbar button { width: 49px; height: 23px; }
.statusbar span { margin-left: auto; }

.matplot { flex: 1; min-width: 0; display: flex; flex-direction: column; background: linear-gradient(#a8a7a5, #f2f1f0 8px); }
.mp-title { display: flex; align-items: center; padding: 9px 6px 0 5px; height: 26px; flex: none; }
.mp-ctl { margin-left: auto; display: flex; align-items: center; }
.dbtn { width: 14px; height: 14px; padding: 0; margin-right: 1px; border: 1px solid #999; border-radius: 3px; background: #eee; font-size: 12px; line-height: 12px; }
.minmax { display: flex; gap: 9px; padding-left: 16px; }
.mp-topic { display: flex; align-items: center; gap: 2px; padding: 5px 10px 0 9px; height: 30px; flex: none; }
.mp-topic > input { flex: 0 1 643px; margin-left: 2px; }
.mp-topic button { display: flex; align-items: center; justify-content: center; gap: 5px; flex: none; }
.w36 { width: 36px; }
.mp-topic .w55 { width: 55px; padding-left: 15px; }
.auto { margin-left: auto; display: flex; align-items: center; gap: 6px; padding-right: 6px; }
.mp-tools { display: flex; align-items: center; gap: 12px; height: 70px; flex: none; padding: 20px 0 0 30px; }
.mp-tools button { width: 24px; height: 24px; padding: 0; border: 0; background: none; }
.mp-tools button svg { width: 24px; height: 24px; }
.sep { width: 1px; height: 24px; background: #d4d3d2; margin: 0 -1px; }
.figure { flex: 1; min-height: 0; margin: 0 22px 22px; background: #bfbfbf; }
.figure svg { width: 100%; height: 100%; }
.legend { font: 16px "DejaVu Sans", sans-serif; }
.tick { font: 13px "DejaVu Sans", sans-serif; }
```
FILE: scene.js
```js
// Ground plane: one metre grid, map plane and cost cloud seen by the orbit camera.
const canvas = document.getElementById('ground');
const ctx = canvas.getContext('2d');
const W = canvas.width, H = canvas.height;
const yaw = 0.620398, pitch = 0.0753982, dist = 6.90646;
const cell = 0.025;
const f = H / 2 / Math.tan(Math.PI / 8);
const c = Math.cos(yaw), s = Math.sin(yaw), cp = Math.cos(pitch), sp = Math.sin(pitch);

function project(x, y) {
  const rx = x - dist * cp * c, ry = y - dist * cp * s, rz = -dist * sp;
  const depth = -cp * c * rx - cp * s * ry - sp * rz;
  if (depth < 0.4) return null;
  return [W / 2 + f * (-s * rx + c * ry) / depth,
          H / 2 - f * (-sp * c * rx - sp * s * ry + cp * rz) / depth];
}

function grid(color) {
  ctx.strokeStyle = color;
  ctx.lineWidth = 1;
  for (let k = -5; k <= 5; k++) {
    for (const flip of [false, true]) {
      ctx.beginPath();
      let pen = false;
      for (let t = -5; t <= 5.001; t += 0.1) {
        const p = flip ? project(t, k) : project(k, t);
        if (!p) { pen = false; continue; }
        if (pen) ctx.lineTo(p[0], p[1]); else ctx.moveTo(p[0], p[1]);
        pen = true;
      }
      ctx.stroke();
    }
  }
}

function trace(points) {
  ctx.beginPath();
  points.forEach(([x, y], i) => i ? ctx.lineTo(x, y) : ctx.moveTo(x, y));
}

ctx.fillStyle = '#303030';
ctx.fillRect(0, 0, W, H);
ctx.fillStyle = '#5d6c6a';
ctx.fillRect(0, 380, W, H);
grid('rgba(160,165,165,.45)');

trace([[0, 508], [430, 460], [475, 460], [894, 486], [894, 918], [0, 918]]);
ctx.fillStyle = '#c0c0c0';
ctx.fill();
trace([[0, 507], [250, 480], [430, 460]]);
ctx.strokeStyle = '#111';
ctx.lineWidth = 2;
ctx.stroke();
trace([[475, 461], [894, 486]]);
ctx.stroke();

ctx.save();
trace([[0, 513], [140, 495], [377, 469], [560, 476], [894, 503], [894, 918], [0, 918]]);
ctx.clip();
grid('rgba(140,140,140,.35)');
ctx.fillStyle = '#fff';
const span = Math.round(7 / cell);
for (let i = -span; i <= span; i++) {
  for (let j = -span; j <= span; j++) {
    const p = project(i * cell, j * cell);
    if (p && p[0] > -3 && p[0] < W && p[1] < H) ctx.fillRect(Math.round(p[0]) - 1, Math.round(p[1]) - 1, 3, 3);
  }
}
ctx.restore();

// Project tree of the editor window that shows through the launcher.
const rows = [['top', 'nav'], ['word', 'cc'], ['file', '', 'sel']];
for (let i = 0; i < 9; i++) rows.push(['file', '']);
rows.push(['dir', 'la']);
for (let i = 0; i < 12; i++) rows.push(['file', '']);
rows.push(['word', 'rv']);
for (let i = 0; i < 4; i++) rows.push(['file', '']);
rows.push(['dir', 'sc']);
for (let i = 0; i < 7; i++) rows.push(['file', '']);
rows.push(['dir', 'sr'], ['top', '.g', '', 'file'], ['top', 'C', '', 'file'], ['top', 'na', '', 'file'], ['top', 'pa', '', 'file']);
document.getElementById('behind').innerHTML = rows.map(([kind, text, extra, icon]) => {
  const shape = kind === 'word' ? '' : (kind === 'file' || icon)
    ? '<svg class="file12"><use href="#d-file"/></svg>'
    : '<svg class="dir16"><use href="#d-dir"/></svg>';
  return `<div class="${kind} ${extra || ''}">${shape}${text}</div>`;
}).join('') + '<div class="foot">Comparing</div>';
```
